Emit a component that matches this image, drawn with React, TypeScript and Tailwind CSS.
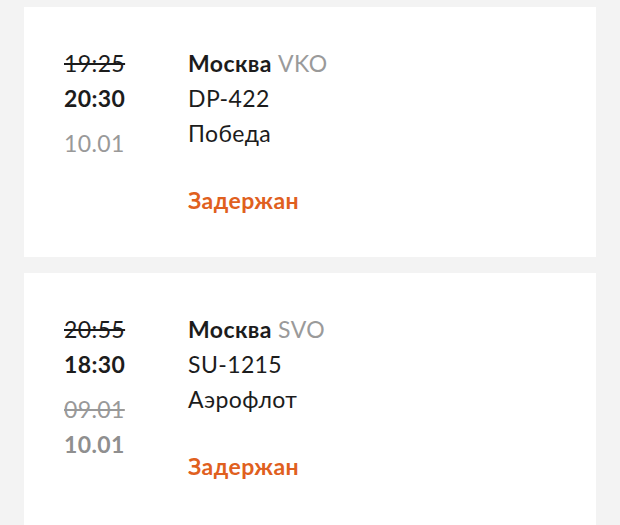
import React from "react";

type Flight = {
  oldTime: string;
  newTime: string;
  oldDate?: string;
  date: string;
  city: string;
  code: string;
  flight: string;
  airline: string;
  status: string;
};

const flights: Flight[] = [
  { oldTime: "19:25", newTime: "20:30", date: "10.01", city: "Москва", code: "VKO", flight: "DP-422", airline: "Победа", status: "Задержан" },
  { oldTime: "20:55", newTime: "18:30", oldDate: "09.01", date: "10.01", city: "Москва", code: "SVO", flight: "SU-1215", airline: "Аэрофлот", status: "Задержан" },
];

function Card({ f, last }: { f: Flight; last: boolean }) {
  return (
    <div className={"bg-white ml-6 mr-6 pl-10 pt-[39px] flex shrink-0 " + (last ? "pb-[60px]" : "pb-[39px]")}>
      <div className="w-[124px] flex flex-col text-[23px] leading-[35px] tracking-[0.4px]">
        <span className="line-through text-[#1c1c1c] decoration-[1.5px]">{f.oldTime}</span>
        <span className="font-bold text-[#1c1c1c]">{f.newTime}</span>
        <div className="mt-[10px] flex flex-col">
          {f.oldDate && <span className="line-through text-[#999999] decoration-[1.5px]">{f.oldDate}</span>}
          <span className={f.oldDate ? "text-[#8f8f8f] font-bold" : "text-[#999999]"}>{f.date}</span>
        </div>
      </div>
      <div className="flex flex-col text-[23px] leading-[35px] tracking-[0.4px] text-[#1c1c1c]">
        <span>
          <span className="font-bold">{f.city}</span> <span className="text-[#9a9a9a]">{f.code}</span>
        </span>
        <span>{f.flight}</span>
        <span>{f.airline}</span>
        <span className="mt-[32px] font-bold text-[#e0601e]">{f.status}</span>
      </div>
    </div>
  );
}

export default function App() {
  return (
    <div className="w-[620px] h-[525px] overflow-hidden bg-[#f3f3f3] pt-[7px] flex flex-col gap-[16px]" style={{ fontFamily: "Lato, 'Open Sans', sans-serif" }}>
      {flights.map((f, i) => (
        <Card key={i} f={f} last={i === flights.length - 1} />
      ))}
    </div>
  );
}
